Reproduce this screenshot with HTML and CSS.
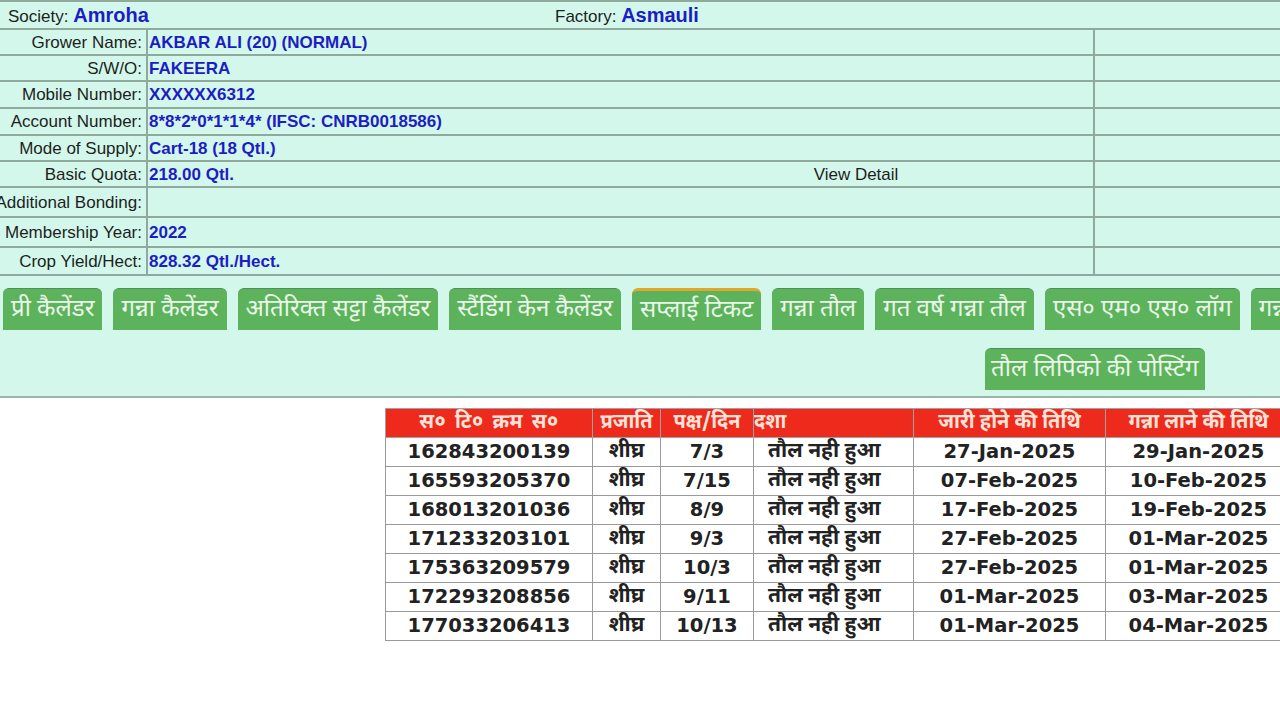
FILE: index.html
```html
<!DOCTYPE html>
<html lang="hi">
<head>
<meta charset="utf-8">
<title>Supply Ticket</title>
<link rel="stylesheet" href="styles.css">
</head>
<body>
<div class="info">
  <div class="hdr">
    <div class="soc">Society: <b>Amroha</b></div>
    <div class="fac">Factory: <b>Asmauli</b></div>
  </div>
  <div class="grid">
    <div class="lbl">Grower Name:</div><div class="val">AKBAR ALI (20) (NORMAL)</div><div class="ext"></div>
    <div class="lbl">S/W/O:</div><div class="val">FAKEERA</div><div class="ext"></div>
    <div class="lbl">Mobile Number:</div><div class="val">XXXXXX6312</div><div class="ext"></div>
    <div class="lbl">Account Number:</div><div class="val">8*8*2*0*1*1*4* (IFSC: CNRB0018586)</div><div class="ext"></div>
    <div class="lbl">Mode of Supply:</div><div class="val">Cart-18 (18 Qtl.)</div><div class="ext"></div>
    <div class="lbl">Basic Quota:</div><div class="val split"><span class="v1">218.00 Qtl.</span><span class="vd">View Detail</span></div><div class="ext"></div>
    <div class="lbl">Additional Bonding:</div><div class="val"></div><div class="ext"></div>
    <div class="lbl">Membership Year:</div><div class="val">2022</div><div class="ext"></div>
    <div class="lbl">Crop Yield/Hect:</div><div class="val">828.32 Qtl./Hect.</div><div class="ext"></div>
  </div>
  <div class="tabs">
    <div class="tabrow">
      <span class="tab">प्री कैलेंडर</span>
      <span class="tab">गन्ना कैलेंडर</span>
      <span class="tab">अतिरिक्त सट्टा कैलेंडर</span>
      <span class="tab">स्टैंडिंग केन कैलेंडर</span>
      <span class="tab active">सप्लाई टिकट</span>
      <span class="tab">गन्ना तौल</span>
      <span class="tab">गत वर्ष गन्ना तौल</span>
      <span class="tab">एस० एम० एस० लॉग</span>
      <span class="tab">गन्ना सर्वे</span>
    </div>
    <div class="tabrow second">
      <span class="tab">तौल लिपिको की पोस्टिंग</span>
    </div>
  </div>
</div>
<table class="tickets">
  <colgroup>
    <col class="c1"><col class="c2"><col class="c3"><col class="c4"><col class="c5"><col class="c6">
  </colgroup>
  <thead>
    <tr><th class="wide">स० टि० क्रम स०</th><th>प्रजाति</th><th>पक्ष/दिन</th><th class="left">दशा</th><th>जारी होने की तिथि</th><th>गन्ना लाने की तिथि</th></tr>
  </thead>
  <tbody>
    <tr><td>162843200139</td><td class="hi">शीघ्र</td><td>7/3</td><td class="hi st">तौल नही हुआ</td><td>27-Jan-2025</td><td>29-Jan-2025</td></tr>
    <tr><td>165593205370</td><td class="hi">शीघ्र</td><td>7/15</td><td class="hi st">तौल नही हुआ</td><td>07-Feb-2025</td><td>10-Feb-2025</td></tr>
    <tr><td>168013201036</td><td class="hi">शीघ्र</td><td>8/9</td><td class="hi st">तौल नही हुआ</td><td>17-Feb-2025</td><td>19-Feb-2025</td></tr>
    <tr><td>171233203101</td><td class="hi">शीघ्र</td><td>9/3</td><td class="hi st">तौल नही हुआ</td><td>27-Feb-2025</td><td>01-Mar-2025</td></tr>
    <tr><td>175363209579</td><td class="hi">शीघ्र</td><td>10/3</td><td class="hi st">तौल नही हुआ</td><td>27-Feb-2025</td><td>01-Mar-2025</td></tr>
    <tr><td>172293208856</td><td class="hi">शीघ्र</td><td>9/11</td><td class="hi st">तौल नही हुआ</td><td>01-Mar-2025</td><td>03-Mar-2025</td></tr>
    <tr><td>177033206413</td><td class="hi">शीघ्र</td><td>10/13</td><td class="hi st">तौल नही हुआ</td><td>01-Mar-2025</td><td>04-Mar-2025</td></tr>
  </tbody>
</table>
</body>
</html>
```
FILE: styles.css
```css
html, body {
  margin: 0;
  padding: 0;
  background: #ffffff;
  overflow: hidden;
}
body {
  font-family: "Liberation Sans", Arial, sans-serif;
  font-size: 17px;
  color: #1e1e1e;
  width: 1280px;
}
.info {
  background: #d3f8eb;
  border-top: 2px solid #8fa99c;
  border-bottom: 2px solid #9cb3a8;
}
.hdr {
  display: flex;
  height: 28px;
  align-items: center;
  border-bottom: 2px solid #8fa99c;
  box-sizing: border-box;
  padding-top: 1px;
}
.hdr b {
  color: #1d1dc4;
  font-size: 20px;
}
.soc {
  width: 555px;
  padding-left: 8px;
  box-sizing: border-box;
}
.grid {
  display: grid;
  grid-template-columns: 148px 947px 1fr;
  grid-template-rows: 26px 26px 27px 27px 26px 26px 30px 30px 26px;
}
.grid > div {
  border-bottom: 2px solid #8fa99c;
  box-sizing: border-box;
  display: flex;
  align-items: center;
  white-space: nowrap;
  padding-top: 1px;
}
.grid > div:nth-last-child(-n+3) {
  border-bottom: none;
}
.lbl {
  justify-content: flex-end;
  padding-right: 4px;
  border-right: 2px solid #8fa99c;
}
.val {
  padding-left: 1px;
  color: #1d1dc4;
  font-weight: bold;
  border-right: 2px solid #8fa99c;
}
.split .v1 {
  width: 470px;
}
.split .vd {
  flex: 1;
  text-align: center;
  font-weight: normal;
  color: #1e1e1e;
}
.tabs {
  border-top: 2px solid #8fa99c;
  padding: 12px 0 6px 3px;
  font-family: "Noto Sans Devanagari", "Lohit Devanagari", "Noto Sans", sans-serif;
}
.tabrow {
  display: flex;
  gap: 11px;
  white-space: nowrap;
}
.tabrow.second {
  margin-top: 18px;
  padding-left: 982px;
}
.tab {
  display: inline-flex;
  align-items: center;
  height: 42px;
  box-sizing: border-box;
  padding: 0 8px;
  background: #5cb35c;
  color: #e9f6e9;
  font-size: 24px;
  border-top: 1px solid #4e8e58;
  border-radius: 6px 6px 0 0;
  flex-shrink: 0;
}
.tabrow.second .tab {
  padding: 0 6px;
}
.tab.active {
  border-top: 3px solid #e2a72a;
}
.tickets {
  margin: 10px 0 0 385px;
  border-collapse: collapse;
  table-layout: fixed;
  width: 906px;
  font-family: "DejaVu Sans", Verdana, sans-serif;
  font-weight: bold;
  font-size: 19.5px;
  color: #222222;
}
.c1 { width: 207px; }
.c2 { width: 68px; }
.c3 { width: 93px; }
.c4 { width: 160px; }
.c5 { width: 192px; }
.c6 { width: 186px; }
.tickets th {
  background: #ee2a1c;
  color: #ffe3d8;
  font-family: "Noto Sans Devanagari", "Lohit Devanagari", "Noto Sans", sans-serif;
  font-size: 20px;
  font-weight: bold;
  height: 28px;
  line-height: 26px;
  padding: 0;
  border: 1px solid #a0a0a0;
  white-space: nowrap;
  overflow: hidden;
}
.tickets th.wide {
  word-spacing: 3px;
  letter-spacing: 0.5px;
}
.tickets th.left {
  text-align: left;
}
.tickets td {
  height: 28px;
  padding: 0;
  text-align: center;
  border: 1px solid #9a9a9a;
  line-height: 26px;
  white-space: nowrap;
}
.tickets td.hi {
  font-family: "Noto Sans Devanagari", "Lohit Devanagari", "Noto Sans", sans-serif;
  font-size: 21px;
}
.tickets td.st {
  text-align: left;
  padding-left: 14px;
}
```
